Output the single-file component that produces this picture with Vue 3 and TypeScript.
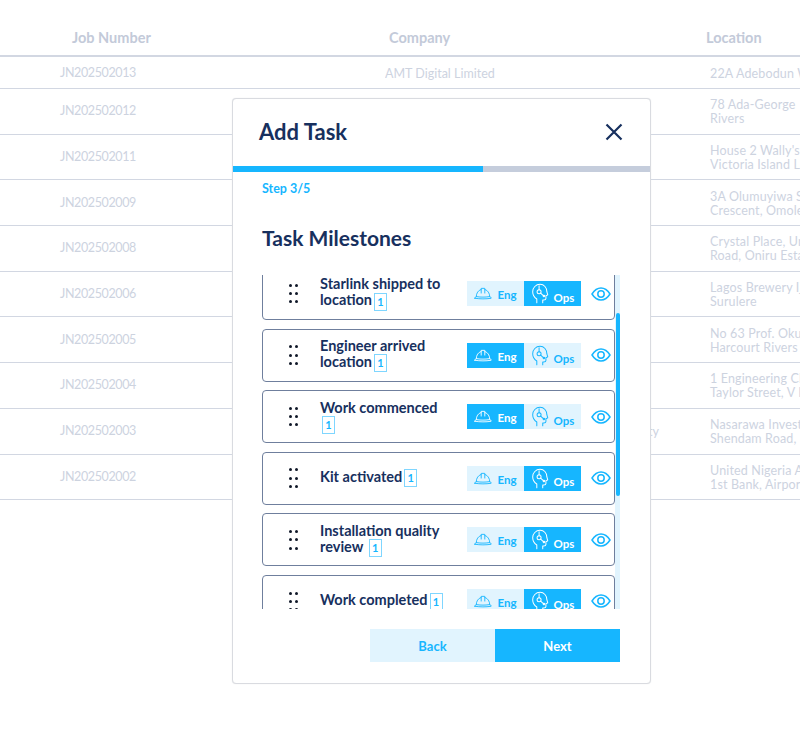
<script setup lang="ts">
interface Job { id: string; company: string; lines: string[] }
interface Milestone { name: string; active: 'eng' | 'ops' }

const jobs: Job[] = [
  { id: 'JN202502013', company: 'AMT Digital Limited', lines: ['22A Adebodun Way'] },
  { id: 'JN202502012', company: '', lines: ['78 Ada-George', 'Rivers'] },
  { id: 'JN202502011', company: '', lines: ["House 2 Wally's Close", 'Victoria Island Lagos'] },
  { id: 'JN202502009', company: '', lines: ['3A Olumuyiwa Street', 'Crescent, Omole Estate'] },
  { id: 'JN202502008', company: '', lines: ['Crystal Place, Unity', 'Road, Oniru Estate'] },
  { id: 'JN202502006', company: '', lines: ['Lagos Brewery Ijora', 'Surulere'] },
  { id: 'JN202502005', company: '', lines: ['No 63 Prof. Okujagu', 'Harcourt Rivers State'] },
  { id: 'JN202502004', company: '', lines: ['1 Engineering Close', 'Taylor Street, V Island'] },
  { id: 'JN202502003', company: 'Nasarawa Investment and Development Authority', lines: ['Nasarawa Investment', 'Shendam Road, Lafia'] },
  { id: 'JN202502002', company: '', lines: ['United Nigeria Airlines', '1st Bank, Airport Road'] },
]

const milestones: Milestone[] = [
  { name: 'Starlink shipped to location', active: 'ops' },
  { name: 'Engineer arrived location', active: 'eng' },
  { name: 'Work commenced ', active: 'eng' },
  { name: 'Kit activated', active: 'ops' },
  { name: 'Installation quality review ', active: 'ops' },
  { name: 'Work completed', active: 'ops' },
]
</script>

<template>
  <div class="page">
    <div class="table">
      <div class="head">
        <div class="hc hc-job">Job Number</div>
        <div class="hc hc-company">Company</div>
        <div class="hc hc-loc">Location</div>
      </div>
      <div v-for="(j, i) in jobs" :key="j.id" class="row" :class="{ first: i === 0 }">
        <div class="c c-job">{{ j.id }}</div>
        <div class="c c-company">{{ j.company }}</div>
        <div class="c c-loc">
          <div v-for="l in j.lines" :key="l">{{ l }}</div>
        </div>
      </div>
    </div>

    <section class="modal">
      <header class="m-head">
        <h1>Add Task</h1>
        <svg class="close" width="20" height="20" viewBox="0 0 20 20" fill="none" stroke="#17305e" stroke-width="2.2">
          <path d="M2.5 2.5 17.5 17.5M17.5 2.5 2.5 17.5" />
        </svg>
      </header>
      <div class="progress"><div class="progress-fill"></div></div>
      <div class="step">Step 3/5</div>
      <h2>Task Milestones</h2>

      <div class="scroller">
        <div class="list">
          <div v-for="m in milestones" :key="m.name" class="item">
            <div class="dots"><i v-for="n in 6" :key="n"></i></div>
            <div class="name">{{ m.name }}<span class="badge">1</span></div>
            <div class="toggle">
              <div class="opt" :class="{ on: m.active === 'eng' }">
                <svg width="18" height="13" viewBox="0 0 20 14" fill="none" stroke="currentColor" stroke-width="1" stroke-linejoin="round" stroke-linecap="round">
                  <path d="M2.500 10.500C2.500 6.500 4.800 3.500 8 2.500V1.300H12V2.500C15.200 3.500 17.500 6.500 17.500 10.500" />
                  <path d="M8 2.500V6.500M12 2.500V6.500" />
                  <path d="M1 12.300C1 11 2 10.500 3 10.500 8 11.200 12 11.200 17 10.500 18 10.500 19 11 19 12.300 13 13.200 7 13.200 1 12.300Z" />
                </svg>
                <span>Eng</span>
              </div>
              <div class="opt ops" :class="{ on: m.active === 'ops' }">
                <svg width="18" height="21" viewBox="0 0 19 23" fill="none" stroke="currentColor" stroke-width="1.100" stroke-linecap="round" stroke-linejoin="round">
                  <path d="M6 21.500V17.500C3 15.500 1.500 13 1.500 9.500 1.500 5 5 1.500 9.500 1.500S17 5 17 9.500L18 13 16 14V17C16 18 15 18.500 13.500 18.500H12.500V21.500" />
                  <circle cx="8.500" cy="9.500" r="2.200" />
                  <path d="M8.500 3V7.300M10.200 11 13.500 14" />
                  <circle cx="13.800" cy="14.300" r=".8" />
                </svg>
                <span>Ops</span>
              </div>
            </div>
            <svg class="eye" width="20" height="14" viewBox="0 0 20 14" fill="none" stroke="#16b6ff" stroke-width="1.500">
              <path d="M1 7C3.500 3 6.500 1 10 1S16.500 3 19 7C16.500 11 13.500 13 10 13S3.500 11 1 7Z" />
              <circle cx="10" cy="7" r="3.200" />
            </svg>
          </div>
        </div>
        <div class="track"><div class="thumb"></div></div>
      </div>

      <footer class="actions">
        <button class="btn back">Back</button>
        <button class="btn next">Next</button>
      </footer>
    </section>
  </div>
</template>

<style scoped>
.page {
  position: relative;
  width: 800px;
  height: 736px;
  overflow: hidden;
  background: #fff;
  font-family: Lato, "Open Sans", sans-serif;
}
.table { padding-top: 20px; width: 1100px; }
.head {
  display: flex;
  align-items: center;
  height: 37px;
  border-bottom: 2px solid #d2d7e2;
  box-sizing: border-box;
  color: #c3cad9;
  font-size: 14.500px;
  font-weight: 700;
}
.hc-job { margin-left: 72px; width: 317px; }
.hc-company { width: 317px; }
.row {
  display: flex;
  align-items: center;
  height: 45.7px;
  box-sizing: border-box;
  border-bottom: 1px solid #d2d7e2;
  color: #cdd3df;
  font-size: 12.500px;
  line-height: 14px;
  letter-spacing: .15px;
}
.row.first { height: 32px; }
.c { white-space: nowrap; }
.c-job { margin-left: 60px; width: 325px; letter-spacing: -.38px; }
.c-company { width: 325px; overflow: hidden; letter-spacing: 0; padding-top: 2px; }
.c-loc { padding-top: 2px; }
.modal {
  position: absolute;
  left: 232px;
  top: 98px;
  width: 419px;
  height: 586px;
  box-sizing: border-box;
  background: #fff;
  border: 1px solid #d9dbe0;
  border-radius: 4px;
  box-shadow: 0 0 1px #d9dbe0;
  display: flex;
  flex-direction: column;
}
.m-head {
  height: 67px;
  display: flex;
  align-items: center;
  justify-content: space-between;
  padding: 0 26px 0 26px;
  flex: none;
}
h1 {
  margin: -2px 0 0;
  font-size: 22px;
  font-weight: 700;
  color: #17305e;
}
.close { margin-top: -2px; }
.progress { height: 6px; background: #c5cddc; flex: none; }
.progress-fill { width: 250px; height: 100%; background: #16b6ff; }
.step {
  margin: 10px 0 0 29px;
  font-size: 12.500px;
  line-height: 14px;
  font-weight: 700;
  color: #16b6ff;
}
h2 {
  margin: 28px 0 0 29px;
  font-size: 21px;
  line-height: 28px;
  font-weight: 700;
  color: #17305e;
}
.scroller {
  position: relative;
  margin: 23px 30px 0 29px;
  height: 334px;
  overflow: hidden;
  flex: none;
}
.list {
  display: flex;
  flex-direction: column;
  gap: 8.600px;
  margin-top: -8px;
  width: 353px;
}
.item {
  height: 53px;
  flex: none;
  box-sizing: border-box;
  border: 1px solid #6f7f9d;
  border-radius: 4px;
  display: flex;
  align-items: center;
  background: #fff;
}
.dots {
  display: grid;
  grid-template-columns: 3px 3px;
  grid-template-rows: repeat(3, 3px);
  gap: 5.300px 3px;
  margin-left: 26px;
  width: 10px;
  flex: none;
}
.dots i { background: #101828; border-radius: 50%; width: 3px; height: 3px; }
.name {
  margin-left: 21px;
  width: 128px;
  margin-right: 19px;
  flex: none;
  font-size: 14.500px;
  line-height: 16px;
  font-weight: 700;
  color: #17305e;
}
.badge {
  display: inline-block;
  box-sizing: border-box;
  width: 13px;
  height: 18px;
  margin-left: 2px;
  border: 1.500px solid #7fd6ff;
  color: #16b6ff;
  font-size: 11px;
  line-height: 15px;
  text-align: center;
  vertical-align: middle;
}
.toggle { display: flex; flex: none; height: 25px; }
.opt {
  width: 57px;
  display: flex;
  align-items: center;
  justify-content: center;
  gap: 5px;
  background: #e1f4fe;
  color: #16b6ff;
  font-size: 11.500px;
  font-weight: 700;
}
.opt.on { background: #16b6ff; color: #fff; }
.opt span { margin-top: 2px; }
.opt.ops span { margin-top: 7px; }
.opt svg { flex: none; }
.eye { margin-left: 10px; flex: none; }
.track {
  position: absolute;
  top: 0;
  bottom: 0;
  left: 353px;
  width: 6px;
  background: #e1f4fe;
}
.thumb {
  position: absolute;
  top: 38px;
  left: 1px;
  width: 4px;
  height: 183px;
  border-radius: 2px;
  background: #16b6ff;
}
.actions {
  margin: 20px 0 0 137px;
  display: flex;
}
.btn {
  width: 125px;
  height: 33px;
  border: 0;
  padding: 0;
  font-family: inherit;
  font-size: 13px;
  font-weight: 700;
}
.back { background: #e1f4fe; color: #16b6ff; }
.next { background: #16b6ff; color: #fff; }
</style>
